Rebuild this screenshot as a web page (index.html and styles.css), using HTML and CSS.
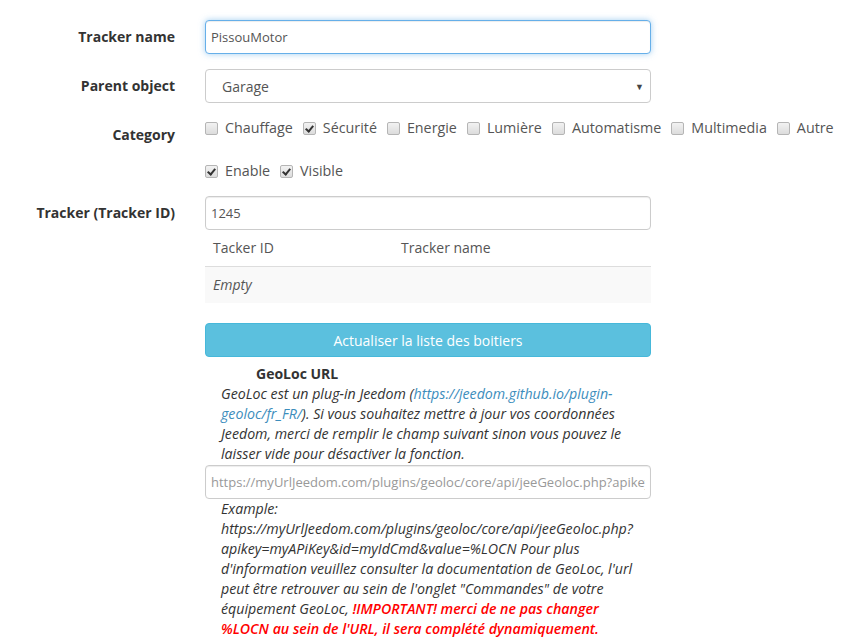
FILE: index.html
```html
<!DOCTYPE html>
<html lang="fr">
<head>
<meta charset="utf-8">
<title>GeoLoc tracker</title>
<link rel="stylesheet" href="styles.css">
</head>
<body>
<form class="form">
  <div class="group">
    <label class="label">Tracker name</label>
    <div class="field"><input class="input input-focus" type="text" value="PissouMotor"></div>
  </div>
  <div class="group">
    <label class="label">Parent object</label>
    <div class="field">
      <div class="select"><span>Garage</span><span class="caret">&#9660;</span></div>
    </div>
  </div>
  <div class="group group-cat">
    <label class="label">Category</label>
    <div class="field checks">
      <span class="check"><span class="box"></span>Chauffage</span>
      <span class="check"><span class="box on"></span>Sécurité</span>
      <span class="check"><span class="box"></span>Energie</span>
      <span class="check"><span class="box"></span>Lumière</span>
      <span class="check"><span class="box"></span>Automatisme</span>
      <span class="check"><span class="box"></span>Multimedia</span>
      <span class="check"><span class="box"></span>Autre</span>
    </div>
  </div>
  <div class="group">
    <span class="label"></span>
    <div class="field checks">
      <span class="check"><span class="box on"></span>Enable</span>
      <span class="check"><span class="box on"></span>Visible</span>
    </div>
  </div>
  <div class="group">
    <label class="label">Tracker (Tracker ID)</label>
    <div class="field">
      <input class="input" type="text" value="1245">
      <table class="table">
        <thead><tr><th class="c1">Tacker ID</th><th>Tracker name</th></tr></thead>
        <tbody><tr><td class="c1 empty">Empty</td><td></td></tr></tbody>
      </table>
      <button type="button" class="btn">Actualiser la liste des boitiers</button>
      <div class="geo-title">GeoLoc URL</div>
      <p class="help">GeoLoc est un plug-in Jeedom (<a href="#">https://jeedom.github.io/plugin-geoloc/fr_FR/</a>). Si vous souhaitez mettre à jour vos coordonnées Jeedom, merci de remplir le champ suivant sinon vous pouvez le laisser vide pour désactiver la fonction.</p>
      <input class="input input-url" type="text" placeholder="https://myUrlJeedom.com/plugins/geoloc/core/api/jeeGeoloc.php?apikey=myAPiKey&amp;id=myIdCmd&amp;value=%LOCN">
      <p class="help">Example: https://myUrlJeedom.com/plugins/geoloc/core/api/jeeGeoloc.php?apikey=myAPiKey&amp;id=myIdCmd&amp;value=%LOCN Pour plus d'information veuillez consulter la documentation de GeoLoc, l'url peut être retrouver au sein de l'onglet "Commandes" de votre équipement GeoLoc, <span class="warn">!IMPORTANT! merci de ne pas changer %LOCN au sein de l'URL, il sera complété dynamiquement.</span></p>
    </div>
  </div>
</form>
</body>
</html>
```
FILE: styles.css
```css
html, body {
  margin: 0;
  padding: 0;
  background: #fff;
}
body {
  font-family: "Open Sans", "Liberation Sans", sans-serif;
  font-size: 14px;
  line-height: 20px;
  color: #333;
  overflow: hidden;
}
.form {
  padding-top: 20px;
}
.group {
  display: grid;
  grid-template-columns: 175px 446px;
  column-gap: 30px;
  margin-bottom: 15px;
}
.group-cat {
  margin-bottom: 16px;
}
.label {
  text-align: right;
  font-weight: 700;
  font-size: 14px;
  color: #333;
  padding-top: 7px;
}
.group > .label:empty {
  padding: 0;
}
.field {
  min-width: 0;
}
.input {
  display: block;
  box-sizing: border-box;
  width: 100%;
  height: 34px;
  margin: 0;
  padding: 6px 5px;
  font-family: "Open Sans", "Liberation Sans", sans-serif;
  font-size: 13px;
  color: #555;
  background: #fff;
  border: 1px solid #ccc;
  border-radius: 4px;
  box-shadow: inset 0 1px 1px rgba(0,0,0,0.075);
  outline: none;
}
.input-focus {
  border-color: #66afe9;
  box-shadow: inset 0 1px 1px rgba(0,0,0,0.075), 0 0 6px rgba(102,175,233,0.6);
}
.input::placeholder {
  color: #999;
}
.select {
  box-sizing: border-box;
  height: 34px;
  display: flex;
  align-items: center;
  justify-content: space-between;
  padding: 1px 6px 0 16px;
  border: 1px solid #ccc;
  border-radius: 4px;
  color: #555;
  font-size: 14px;
}
.caret {
  font-size: 9px;
  color: #444;
}
.checks {
  display: flex;
  gap: 10px;
  white-space: nowrap;
  color: #555;
  font-size: 14.3px;
}
.check {
  position: relative;
  padding-left: 20px;
}
.box {
  position: absolute;
  left: 0;
  top: 4px;
  width: 11px;
  height: 11px;
  border: 1px solid #b5b5b5;
  border-radius: 2px;
  background: linear-gradient(#f2f2f2, #dcdcdc);
}
.box.on::after {
  content: "";
  position: absolute;
  left: 3px;
  top: 1px;
  width: 3px;
  height: 6px;
  border: solid #333;
  border-width: 0 2px 2px 0;
  transform: rotate(40deg);
}
.table {
  width: 100%;
  border-collapse: collapse;
  margin-bottom: 20px;
  color: #555;
}
.table th {
  text-align: left;
  font-weight: 400;
  padding: 8px;
  border-bottom: 1px solid #ddd;
}
.table td {
  padding: 8px;
  background: #f9f9f9;
  height: 20px;
}
.table .c1 {
  width: 172px;
}
.empty {
  font-style: italic;
}
.btn {
  display: block;
  width: 100%;
  height: 34px;
  margin: 0;
  padding: 0;
  font-family: "Open Sans", "Liberation Sans", sans-serif;
  font-size: 14px;
  color: #fff;
  background: #5bc0de;
  border: 1px solid #46b8da;
  border-radius: 4px;
}
.geo-title {
  margin-top: 7px;
  padding-left: 51px;
  font-weight: 700;
}
.help {
  margin: 0;
  padding: 0 14px 0 16px;
  font-style: italic;
  font-size: 14.2px;
  color: #333;
}
.help a {
  color: #3c8dbc;
  text-decoration: none;
}
.input-url {
  margin-top: 1px;
}
.warn {
  color: #f00;
  font-weight: 600;
}
```
